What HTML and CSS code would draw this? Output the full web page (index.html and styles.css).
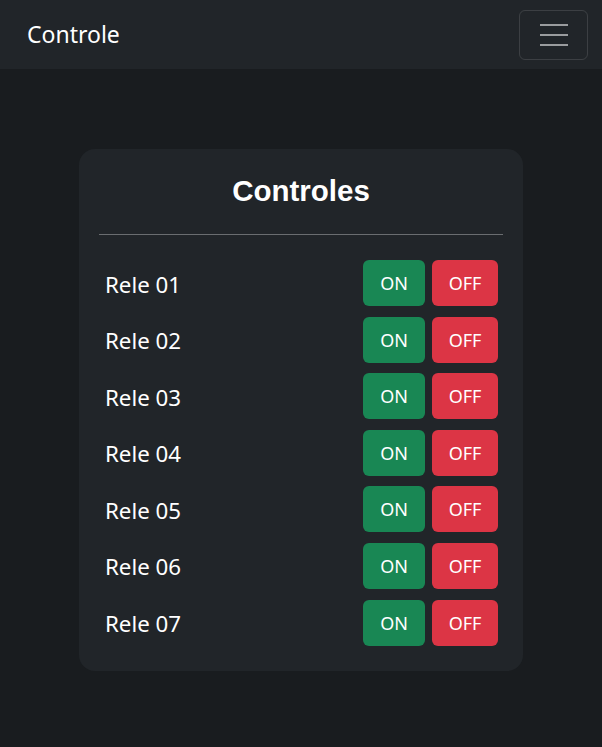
FILE: index.html
```html
<!DOCTYPE html>
<html lang="pt">
<head>
<meta charset="utf-8">
<title>Controle</title>
<link rel="stylesheet" href="styles.css">
</head>
<body>
<nav class="navbar">
  <span class="brand">Controle</span>
  <button class="toggler" aria-label="Menu">
    <svg width="30" height="30" viewBox="0 0 30 30"><path d="M1 5h28M1 15h28M1 25h28" stroke="rgba(255,255,255,0.55)" stroke-width="2" stroke-linecap="butt"/></svg>
  </button>
</nav>
<main class="main">
  <section class="card">
    <h1 class="title">Controles</h1>
    <hr class="divider">
    <div class="rows">
      <div class="row"><span class="label">Rele 01</span><div class="btns"><button class="btn on">ON</button><button class="btn off">OFF</button></div></div>
      <div class="row"><span class="label">Rele 02</span><div class="btns"><button class="btn on">ON</button><button class="btn off">OFF</button></div></div>
      <div class="row"><span class="label">Rele 03</span><div class="btns"><button class="btn on">ON</button><button class="btn off">OFF</button></div></div>
      <div class="row"><span class="label">Rele 04</span><div class="btns"><button class="btn on">ON</button><button class="btn off">OFF</button></div></div>
      <div class="row"><span class="label">Rele 05</span><div class="btns"><button class="btn on">ON</button><button class="btn off">OFF</button></div></div>
      <div class="row"><span class="label">Rele 06</span><div class="btns"><button class="btn on">ON</button><button class="btn off">OFF</button></div></div>
      <div class="row"><span class="label">Rele 07</span><div class="btns"><button class="btn on">ON</button><button class="btn off">OFF</button></div></div>
    </div>
  </section>
</main>
</body>
</html>
```
FILE: styles.css
```css
* { box-sizing: border-box; }
html, body { margin: 0; padding: 0; }
body {
  background: #191c1f;
  color: #fff;
  font-family: "Noto Sans", "Open Sans", sans-serif;
  height: 747px;
}
.navbar {
  height: 69px;
  background: #212529;
  display: flex;
  align-items: center;
  justify-content: space-between;
  padding: 0 14px 0 27px;
}
.brand {
  font-size: 23px;
  color: #fff;
  line-height: 1;
}
.toggler {
  width: 69px;
  height: 50px;
  background: transparent;
  border: 1px solid rgba(255,255,255,0.12);
  border-radius: 6px;
  display: flex;
  align-items: center;
  justify-content: center;
  padding: 0;
}
.toggler svg { display: block; width: 30px; height: 30px; }
.main {
  display: flex;
  justify-content: center;
  padding: 80px 0 0 0;
}
.card {
  width: 444px;
  background: #212529;
  border-radius: 16px;
  padding: 24px 20px 25px 20px;
}
.title {
  margin: 0;
  text-align: center;
  font-family: "Liberation Sans", Arial, sans-serif;
  font-weight: 700;
  font-size: 29.5px;
  line-height: 36px;
}
.divider {
  border: 0;
  border-top: 1px solid #6a6d70;
  margin: 25px 0 25px 0;
}
.rows {
  display: flex;
  flex-direction: column;
  gap: 10.6px;
}
.row {
  display: flex;
  align-items: center;
  justify-content: space-between;
  padding: 0 5px 0 6px;
}
.label {
  font-size: 22.3px;
  padding-top: 2px;
}
.btns {
  display: flex;
  gap: 7px;
}
.btn {
  height: 46px;
  border: 0;
  border-radius: 6px;
  color: #fff;
  font-family: "Noto Sans", "Open Sans", sans-serif;
  font-size: 18px;
  padding: 0;
}
.on { width: 62px; background: #198754; }
.off { width: 66px; background: #dc3545; }
```
